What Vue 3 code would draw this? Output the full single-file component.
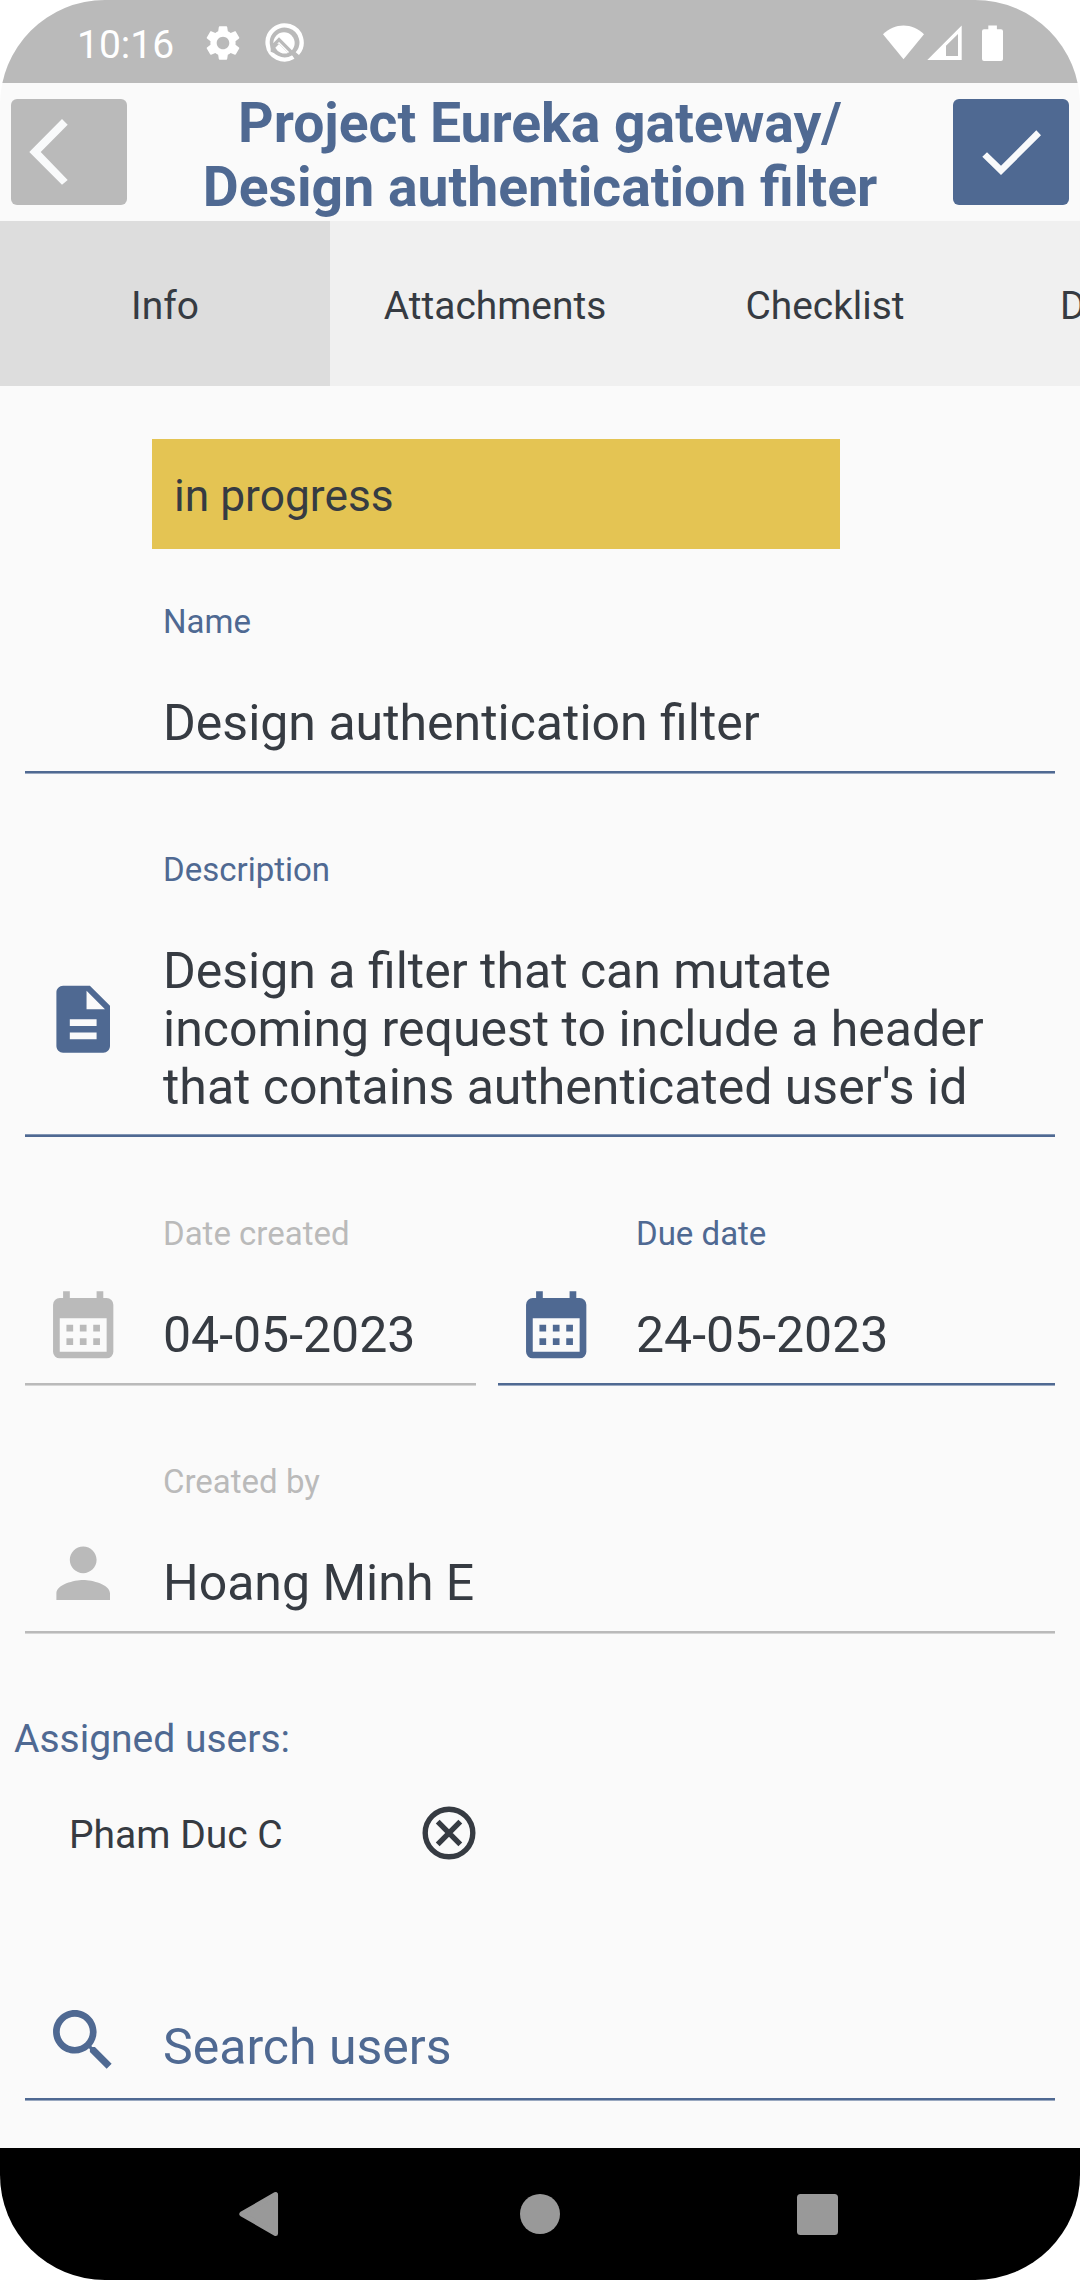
<script setup>
const tabs = ['Info', 'Attachments', 'Checklist']
const description = [
  'Design a filter that can mutate',
  'incoming request to include a header',
  "that contains authenticated user's id",
]
const calendarPath =
  'M6 1h2v2h8V1h2v2h1a2 2 0 0 1 2 2v14a2 2 0 0 1-2 2H5a2 2 0 0 1-2-2V5a2 2 0 0 1 2-2h1zM5 9v10h14V9zM7 11h2v2H7zM11 11h2v2h-2zM15 11h2v2h-2zM7 15h2v2H7zM11 15h2v2h-2zM15 15h2v2h-2z'
</script>

<template>
  <div class="screen">
    <div class="status">
      <span class="clock">10:16</span>
      <svg class="gear" viewBox="0 0 24 24">
        <path d="M19.14 12.94c.04-.3.06-.61.06-.94 0-.32-.02-.64-.07-.94l2.03-1.58c.18-.14.23-.41.12-.61l-1.92-3.32c-.12-.22-.37-.29-.59-.22l-2.39.96c-.5-.38-1.03-.7-1.62-.94l-.36-2.54c-.04-.24-.24-.41-.48-.41h-3.84c-.24 0-.43.17-.47.41l-.36 2.54c-.59.24-1.13.57-1.62.94l-2.39-.96c-.22-.08-.47 0-.59.22L2.74 8.87c-.12.21-.08.47.12.61l2.03 1.58c-.05.3-.09.63-.09.94s.02.64.07.94l-2.03 1.58c-.18.14-.23.41-.12.61l1.92 3.32c.12.22.37.29.59.22l2.39-.96c.5.38 1.03.7 1.62.94l.36 2.54c.05.24.24.41.48.41h3.84c.24 0 .44-.17.47-.41l.36-2.54c.59-.24 1.13-.56 1.62-.94l2.39.96c.22.08.47 0 .59-.22l1.92-3.32c.12-.22.07-.47-.12-.61l-2.01-1.58zM12 15.6c-1.98 0-3.6-1.62-3.6-3.6s1.62-3.6 3.6-3.6 3.6 1.62 3.6 3.6-1.62 3.6-3.6 3.6z" />
      </svg>
      <svg class="quick" viewBox="0 0 120 120">
        <path d="M88 102A51 51 0 1 1 100 92" fill="none" stroke="#fff" stroke-width="13" />
        <circle cx="60" cy="60" r="32" />
        <path d="M28 67L45 50L104 109" fill="none" stroke="#bababa" stroke-width="10" />
        <path d="M20 60L45 62L78 96L56 100L20 86z" fill="#bababa" />
        <path d="M45 63L72 90A32 32 0 0 1 34 74z" />
      </svg>
      <svg class="signals" viewBox="0 0 126 40">
        <path d="M3 12.3C14.500 .4 32.500 .4 44 12.300L23.500 37.300z" />
        <path d="M47.300 38L81.700 3.500V38zM66 23.800V34H78V12z" fill-rule="evenodd" />
        <path d="M108.300 3.500h8.600v3.800h4.100a2 2 0 0 1 2 2v27.700a2 2 0 0 1-2 2h-17a2 2 0 0 1-2-2V9.300a2 2 0 0 1 2-2h4.300z" />
      </svg>
    </div>

    <header class="header">
      <button class="btn back">
        <svg viewBox="0 0 116 106"><path d="M51 20L56.700 25.700L29.700 53L56.700 81L51 85.700L18.300 53z" /></svg>
      </button>
      <h1 class="title">Project Eureka gateway/<br />Design authentication filter</h1>
      <button class="btn confirm">
        <svg viewBox="0 0 116 106"><path d="M29.300 57.700L34 53.300L48 66.700L83.300 31.300L88 36.300L48 76z" /></svg>
      </button>
    </header>

    <nav class="tabs">
      <div v-for="(tab, i) in tabs" :key="tab" class="tab" :class="{ active: i === 0 }">{{ tab }}</div>
      <div class="tab partial">D</div>
    </nav>

    <main class="content">
      <div class="state">in progress</div>

      <section class="field name">
        <div class="body">
          <label>Name</label>
          <p>Design authentication filter</p>
        </div>
      </section>

      <section class="field desc">
        <svg class="icon" viewBox="0 0 24 24">
          <path d="M14 2H6c-1.100 0-2 .9-2 2v16c0 1.100.9 2 2 2h12c1.100 0 2-.9 2-2V8zM16 18H8v-2h8zM16 14H8v-2h8zM13 9V3.500L18.500 9z" />
        </svg>
        <div class="body">
          <label>Description</label>
          <p><span v-for="line in description" :key="line" class="line">{{ line }}</span></p>
        </div>
      </section>

      <div class="dates">
        <section class="field muted created">
          <svg class="icon" viewBox="0 0 24 24"><path fill-rule="evenodd" :d="calendarPath" /></svg>
          <div class="body">
            <label>Date created</label>
            <p>04-05-2023</p>
          </div>
        </section>
        <section class="field due">
          <svg class="icon" viewBox="0 0 24 24"><path fill-rule="evenodd" :d="calendarPath" /></svg>
          <div class="body">
            <label>Due date</label>
            <p>24-05-2023</p>
          </div>
        </section>
      </div>

      <section class="field muted author">
        <svg class="icon" viewBox="0 0 24 24">
          <path d="M12 12c2.210 0 4-1.790 4-4s-1.790-4-4-4-4 1.790-4 4 1.790 4 4 4zM12 14c-2.670 0-8 1.340-8 4v2h16v-2c0-2.660-5.330-4-8-4z" />
        </svg>
        <div class="body">
          <label>Created by</label>
          <p>Hoang Minh E</p>
        </div>
      </section>

      <h2 class="assigned">Assigned users:</h2>
      <div class="user">
        <span class="user-name">Pham Duc C</span>
        <svg class="remove" viewBox="0 0 64 64">
          <circle cx="32" cy="32" r="23.800" />
          <path d="M20.700 20.700L43.300 43.300M43.300 20.700L20.700 43.300" />
        </svg>
      </div>

      <section class="field search">
        <svg class="icon" viewBox="0 0 24 24">
          <path d="M15.500 14h-.79l-.28-.27C15.410 12.590 16 11.110 16 9.500 16 5.910 13.090 3 9.500 3S3 5.910 3 9.500 5.910 16 9.500 16c1.610 0 3.090-.59 4.230-1.570l.27.28v.79l5 4.990L20.490 19zM9.500 14C7.010 14 5 11.990 5 9.500S7.010 5 9.500 5 14 7.010 14 9.500 11.990 14 9.500 14z" />
        </svg>
        <div class="body"><p>Search users</p></div>
      </section>
    </main>

    <footer class="system-nav">
      <svg viewBox="0 0 48 48"><path d="M40 4.500V43.500L5.500 24z" stroke="#999" stroke-width="5" stroke-linejoin="round" transform="translate(-1.600 0) scale(.98 1)" /></svg>
      <svg viewBox="0 0 48 48"><circle cx="24" cy="24" r="20" /></svg>
      <svg viewBox="0 0 48 48"><rect x="3" y="4" width="41" height="41" rx="3.500" /></svg>
    </footer>
  </div>
</template>

<style>
body {
  margin: 0;
  background: #fff;
}
</style>

<style scoped>
.screen {
  --blue: #4f6992;
  --gray: #bababa;
  --ink: #363b42;
  width: 1080px;
  height: 2280px;
  border-radius: 105px;
  overflow: hidden;
  display: flex;
  flex-direction: column;
  background: #fafafa;
  color: var(--ink);
  font-family: Roboto, sans-serif;
}
svg {
  display: block;
  flex: none;
}
.status {
  height: 83px;
  display: flex;
  align-items: flex-start;
  background: var(--gray);
  color: #fff;
  fill: #fff;
}
.clock {
  width: 125px;
  margin: 23px 0 0 77px;
  font-size: 39px;
  line-height: 45px;
}
.gear {
  width: 42px;
  height: 42px;
  margin-top: 22px;
}
.quick {
  width: 40px;
  height: 40px;
  margin: 23px 0 0 20px;
}
.signals {
  width: 126px;
  height: 40px;
  margin: 22px 74px 0 auto;
}
.header {
  height: 138px;
  display: flex;
  justify-content: space-between;
  padding: 0 11px;
}
.header,
.tabs,
.user {
  box-sizing: border-box;
}
.btn {
  width: 116px;
  height: 106px;
  margin: 16px 0 0;
  padding: 0;
  border: 0;
  border-radius: 6px;
  background: var(--gray);
  fill: #f9fafb;
}
.confirm {
  background: var(--blue);
}
.title {
  margin: 9px 0 0;
  color: var(--blue);
  font-size: 55.3px;
  font-weight: 700;
  line-height: 64px;
  text-align: center;
  white-space: nowrap;
}
.tabs {
  height: 165px;
  display: flex;
  overflow: hidden;
  background: #f0f0f0;
}
.tab {
  flex: 0 0 330px;
  text-align: center;
  font-size: 38.9px;
  line-height: 170px;
}
.active {
  background: #ddd;
}
.partial {
  flex-basis: 90px;
  box-sizing: border-box;
  padding-left: 70px;
  text-align: left;
}
.content {
  flex: 1;
  display: flex;
  flex-direction: column;
  padding: 53px 25px 0;
}
.state {
  width: 688px;
  height: 110px;
  box-sizing: border-box;
  margin-left: 127px;
  padding: 31px 22px 0;
  background: #e4c453;
  font-size: 44.3px;
  line-height: 52px;
}
.field {
  display: flex;
  align-items: flex-start;
  box-sizing: border-box;
  height: 171px;
  margin-bottom: 1px;
  border-bottom: 2px solid var(--blue);
  box-shadow: 0 1px #9aa9c1;
  color: var(--blue);
}
.body {
  flex: 1;
}
.icon {
  width: 80.4px;
  height: 80.4px;
  margin: 74px 39.6px 0 18px;
  fill: currentColor;
}
.field label {
  display: block;
  margin-bottom: 53px;
  font-size: 33px;
  line-height: 39px;
}
.field p {
  margin: 0;
  color: var(--ink);
  font-size: 50px;
  line-height: 58px;
  white-space: nowrap;
}
.line {
  display: block;
}
.muted {
  color: var(--gray);
  border-color: var(--gray);
  box-shadow: 0 1px #d6d6d6;
}
.name {
  margin-top: 53px;
  padding-left: 138px;
}
.desc {
  height: 287px;
  margin: 76px 0 0;
  box-shadow: inset 0 -1px #8195b3;
}
.desc .icon {
  margin-top: 128.5px;
}
.dates {
  display: flex;
  gap: 22px;
  margin-top: 77px;
}
.created {
  width: 451px;
}
.due {
  flex: 1;
}
.author {
  margin-top: 76px;
}
.author .icon {
  margin-top: 70.6px;
}
.assigned {
  margin: 83px 0 0 -11px;
  color: var(--blue);
  font-size: 39px;
  font-weight: 400;
  line-height: 45px;
}
.user {
  height: 64px;
  display: flex;
  align-items: flex-start;
  margin-top: 38px;
  padding-left: 44px;
}
.user-name {
  width: 347.5px;
  padding-top: 13px;
  font-size: 39px;
  line-height: 45px;
}
.remove {
  width: 64px;
  height: 64px;
  margin-top: 0.5px;
  fill: none;
  stroke: var(--ink);
  stroke-width: 5.4;
}
.search {
  height: 100px;
  margin-top: 136px;
}
.search .icon {
  margin-top: 0;
}
.search p {
  margin-top: 18px;
  color: var(--blue);
}
.system-nav {
  height: 132px;
  display: flex;
  align-items: center;
  justify-content: center;
  gap: 230px;
  background: #000;
  fill: #999;
}
.system-nav svg {
  width: 48px;
  height: 48px;
}
</style>
